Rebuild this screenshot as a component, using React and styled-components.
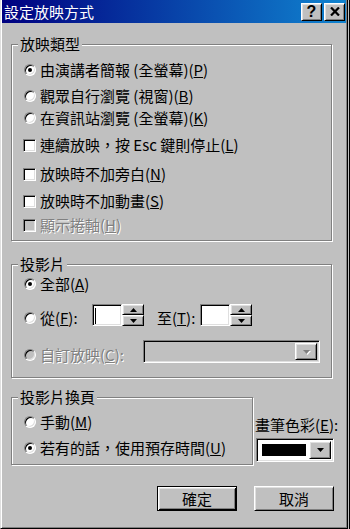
import React from 'react';
import styled, { createGlobalStyle, css } from 'styled-components';

const Global = createGlobalStyle`
  html, body { margin: 0; padding: 0; }
  html { background: linear-gradient(to left, #000 1px, #c0c0c0 1px); }
  body {
    font-family: "Noto Sans CJK TC", "Noto Sans", sans-serif;
    font-size: 15px;
    color: #000;
  }
  #root { width: 350px; height: 529px; }
`;

const raised = css`
  border: 1px solid;
  border-color: #fff #000 #000 #fff;
  box-shadow: inset 1px 1px #dfdfdf, inset -1px -1px #808080;
  background: #c0c0c0;
`;

const sunken = css`
  border: 1px solid;
  border-color: #808080 #fff #fff #808080;
  box-shadow: inset 1px 1px #000, inset -1px -1px #dfdfdf;
`;

const Dialog = styled.div`
  box-sizing: border-box;
  width: 348px;
  height: 529px;
  background: #c0c0c0;
  border-left: 1px solid #dfdfdf;
  border-right: 1px solid #000;
  border-bottom: 1px solid #000;
  box-shadow: inset 1px 0 #fff, inset -1px -1px #808080;
  padding: 0 1px 1px;
  display: flex;
  flex-direction: column;
`;

const TitleBar = styled.div`
  height: 23px;
  display: flex;
  align-items: center;
  gap: 2px;
  background: linear-gradient(to right, #000080, #1084d0);
  color: #fff;
  padding: 0 1px 0 2px;
`;

const TitleText = styled.span`
  flex: 1;
  font-size: 15px;
  line-height: 23px;
  white-space: nowrap;
`;

const TitleButton = styled.button`
  ${raised};
  box-sizing: border-box;
  width: 21px;
  height: 18px;
  padding: 0;
  display: flex;
  align-items: center;
  justify-content: center;
  font-family: "Liberation Sans", Arial, sans-serif;
  font-weight: bold;
  font-size: 16px;
  line-height: 1;
  color: #000;
`;

const Body = styled.div`
  display: flex;
  flex-direction: column;
  padding: 21px 12px 0 9px;
`;

const Group = styled.div`
  position: relative;
  box-sizing: border-box;
  width: ${(p) => p.$w}px;
  border: 1px solid #808080;
  box-shadow: 1px 1px 0 #fff, inset 1px 1px 0 #fff;
  padding: ${(p) => p.$pad};
  margin-top: ${(p) => p.$mt || 0}px;
  display: flex;
  flex-direction: column;
  flex: none;
`;

const GroupLabel = styled.span`
  position: absolute;
  top: -9px;
  left: 6px;
  padding: 0 2px;
  line-height: 16px;
  background: #c0c0c0;
  white-space: nowrap;
`;

const Row = styled.div`
  display: flex;
  align-items: ${(p) => p.$align || 'center'};
  margin-top: ${(p) => p.$mt || 0}px;
  min-height: 16px;
`;

const Option = styled.label`
  display: flex;
  align-items: center;
  gap: 4px;
  line-height: 16px;
  white-space: nowrap;
  flex: none;
  width: ${(p) => (p.$w ? `${p.$w}px` : 'auto')};
  color: ${(p) => (p.$disabled ? '#808080' : '#000')};
  text-shadow: ${(p) => (p.$disabled ? '1px 1px 0 #fff' : 'none')};
`;

const RadioDot = styled.span`
  box-sizing: border-box;
  width: 12px;
  height: 12px;
  border-radius: 50%;
  flex: none;
  border: 1px solid;
  border-color: #808080 #fff #fff #808080;
  box-shadow: inset 1px 1px #000, inset -1px -1px #dfdfdf;
  background: ${(p) => (p.$disabled ? '#c0c0c0' : '#fff')};
  display: flex;
  align-items: center;
  justify-content: center;
  &::after {
    content: '';
    width: 4px;
    height: 4px;
    border-radius: 50%;
    background: #000;
    display: ${(p) => (p.$checked ? 'block' : 'none')};
  }
`;

const CheckBox = styled.span`
  box-sizing: border-box;
  width: 13px;
  height: 13px;
  flex: none;
  margin-left: -1px;
  ${sunken};
  background: ${(p) => (p.$disabled ? '#c0c0c0' : '#fff')};
`;

const FieldLabel = styled.span`
  line-height: 16px;
  white-space: nowrap;
  flex: none;
  width: ${(p) => p.$w}px;
  margin-left: ${(p) => p.$ml || 0}px;
`;

const SpinWrap = styled.div`
  display: flex;
  flex: none;
`;

const SpinEdit = styled.div`
  ${sunken};
  box-sizing: border-box;
  width: 30px;
  height: 22px;
  background: #fff;
  padding: 3px 0 0 2px;
`;

const Caret = styled.span`
  display: block;
  width: 1px;
  height: 16px;
  background: #000;
`;

const SpinButtons = styled.div`
  display: flex;
  flex-direction: column;
  width: 22px;
`;

const SpinButton = styled.div`
  ${raised};
  box-sizing: border-box;
  height: 11px;
  display: flex;
  align-items: center;
  justify-content: center;
`;

const Combo = styled.div`
  ${sunken};
  box-sizing: border-box;
  width: ${(p) => p.$w}px;
  height: ${(p) => p.$h}px;
  background: ${(p) => (p.$disabled ? '#c0c0c0' : '#fff')};
  padding: 2px;
  display: flex;
  flex: none;
`;

const ComboValue = styled.div`
  flex: 1;
  display: flex;
  padding: 3px;
`;

const Swatch = styled.div`
  flex: 1;
  background: #000;
`;

const DropButton = styled.div`
  ${raised};
  box-sizing: border-box;
  width: 22px;
  flex: none;
  display: flex;
  align-items: center;
  justify-content: center;
  margin-left: auto;
`;

const BottomRow = styled.div`
  display: flex;
  align-items: flex-start;
  margin-top: 19px;
`;

const PenColumn = styled.div`
  display: flex;
  flex-direction: column;
  margin-left: 3px;
  padding-top: 20px;
  gap: 5px;
`;

const PenLabel = styled.span`
  line-height: 16px;
  white-space: nowrap;
  margin-left: -1px;
`;

const ButtonRow = styled.div`
  display: flex;
  justify-content: flex-end;
  gap: 17px;
  margin-top: 21px;
`;

const PushButton = styled.button`
  box-sizing: border-box;
  width: 80px;
  height: 25px;
  padding: 0;
  font: inherit;
  font-size: 15px;
  line-height: 1;
  color: #000;
  ${raised};
  ${(p) =>
    p.$default &&
    css`
      border: 1px solid #000;
      box-shadow: inset 1px 1px #fff, inset -1px -1px #000, inset 2px 2px #dfdfdf,
        inset -2px -2px #808080;
    `}
`;

const Arrow = ({ up, disabled }) => (
  <svg width="7" height="4" viewBox="0 0 7 4" style={{ display: 'block', overflow: 'visible' }}>
    {disabled && (
      <polygon points={up ? '4.5,1 8,5 1,5' : '1,1 8,1 4.5,5'} fill="#fff" />
    )}
    <polygon
      points={up ? '3.5,0 7,4 0,4' : '0,0 7,0 3.5,4'}
      fill={disabled ? '#808080' : '#000'}
    />
  </svg>
);

const Spin = ({ caret }) => (
  <SpinWrap>
    <SpinEdit>{caret && <Caret />}</SpinEdit>
    <SpinButtons>
      <SpinButton>
        <Arrow up />
      </SpinButton>
      <SpinButton>
        <Arrow />
      </SpinButton>
    </SpinButtons>
  </SpinWrap>
);

const Radio = ({ checked, disabled, children, w }) => (
  <Option $disabled={disabled} $w={w}>
    <RadioDot $checked={checked} $disabled={disabled} />
    <span>{children}</span>
  </Option>
);

const Check = ({ disabled, children }) => (
  <Option $disabled={disabled}>
    <CheckBox $disabled={disabled} />
    <span>{children}</span>
  </Option>
);

export default function App() {
  return (
    <>
      <Global />
      <Dialog>
        <TitleBar>
          <TitleText>設定放映方式</TitleText>
          <TitleButton>?</TitleButton>
          <TitleButton>
            <svg width="10" height="9" viewBox="0 0 10 9">
              <path d="M1 0.5 L9 8.5 M9 0.5 L1 8.5" stroke="#000" strokeWidth="2.2" />
            </svg>
          </TitleButton>
        </TitleBar>
        <Body>
          <Group $w={321} $pad="17px 0 7px 12px">
            <GroupLabel>放映類型</GroupLabel>
            <Row>
              <Radio checked>由演講者簡報 (全螢幕)(<u>P</u>)</Radio>
            </Row>
            <Row $mt={10}>
              <Radio>觀眾自行瀏覽 (視窗)(<u>B</u>)</Radio>
            </Row>
            <Row $mt={6}>
              <Radio>在資訊站瀏覽 (全螢幕)(<u>K</u>)</Radio>
            </Row>
            <Row $mt={11}>
              <Check>連續放映，按 Esc 鍵則停止(<u>L</u>)</Check>
            </Row>
            <Row $mt={13}>
              <Check>放映時不加旁白(<u>N</u>)</Check>
            </Row>
            <Row $mt={11}>
              <Check>放映時不加動畫(<u>S</u>)</Check>
            </Row>
            <Row $mt={8}>
              <Check disabled>顯示捲軸(<u>H</u>)</Check>
            </Row>
          </Group>

          <Group $w={321} $mt={23} $pad="11px 0 14px 12px">
            <GroupLabel>投影片</GroupLabel>
            <Row>
              <Radio checked>全部(<u>A</u>)</Radio>
            </Row>
            <Row $mt={12} $align="flex-end">
              <Radio w={68}>從(<u>F</u>):</Radio>
              <Spin caret />
              <FieldLabel $w={43} $ml={13}>
                至(<u>T</u>):
              </FieldLabel>
              <Spin />
            </Row>
            <Row $mt={14} $align="flex-end">
              <Radio disabled w={119}>
                自訂放映(<u>C</u>):
              </Radio>
              <Combo $w={177} $h={23} $disabled>
                <DropButton>
                  <Arrow disabled />
                </DropButton>
              </Combo>
            </Row>
          </Group>

          <BottomRow>
            <Group $w={242} $pad="16px 0 8px 12px">
              <GroupLabel>投影片換頁</GroupLabel>
              <Row>
                <Radio>手動(<u>M</u>)</Radio>
              </Row>
              <Row $mt={10}>
                <Radio checked>若有的話，使用預存時間(<u>U</u>)</Radio>
              </Row>
            </Group>
            <PenColumn>
              <PenLabel>畫筆色彩(<u>E</u>):</PenLabel>
              <Combo $w={78} $h={24}>
                <ComboValue>
                  <Swatch />
                </ComboValue>
                <DropButton>
                  <Arrow />
                </DropButton>
              </Combo>
            </PenColumn>
          </BottomRow>

          <ButtonRow>
            <PushButton $default>確定</PushButton>
            <PushButton>取消</PushButton>
          </ButtonRow>
        </Body>
      </Dialog>
    </>
  );
}
